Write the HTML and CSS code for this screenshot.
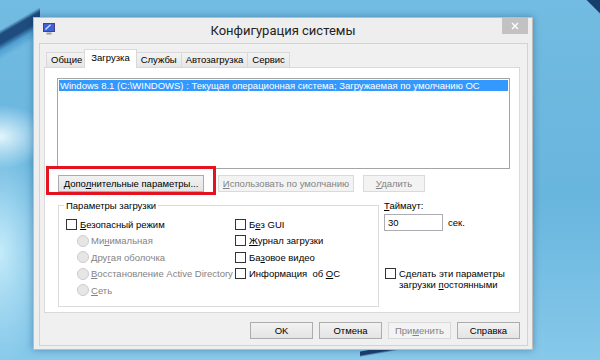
FILE: index.html
```html
<!DOCTYPE html>
<html lang="ru">
<head>
  <meta charset="UTF-8" />
  <title>Конфигурация системы</title>
  <link rel="stylesheet" href="styles.css">
</head>
<body>
  <div class="desktop">
    <div class="window">
      <div class="titlebar">
        <svg class="app-icon" viewBox="0 0 12 12" width="12" height="12">
          <rect x="0.5" y="0.5" width="11" height="8" fill="#3d63d6" stroke="#4a3f8f"/>
          <path d="M2.5 6.5 L7.5 1.8" stroke="#d9e8ff" stroke-width="1.2"/>
          <path d="M3.5 10.5 H8.5" stroke="#9c9c9c" stroke-width="2"/>
        </svg>
        <div class="title">Конфигурация системы</div>
        <div class="close">
          <svg viewBox="0 0 26 16" width="26" height="16">
            <path d="M10 5 L16 11 M16 5 L10 11" stroke="#fff" stroke-width="1.4"/>
          </svg>
        </div>
      </div>

      <div class="client">
        <div class="tabs">
          <div class="tab">Общие</div>
          <div class="tab active">Загрузка</div>
          <div class="tab">Службы</div>
          <div class="tab">Автозагрузка</div>
          <div class="tab">Сервис</div>
        </div>

        <div class="panel">
          <div class="listbox">
            <div class="item selected">Windows 8.1 (C:\WINDOWS) : Текущая операционная система; Загружаемая по умолчанию ОС</div>
          </div>

          <div class="btn-row">
            <button class="btn w-adv">Допо<u>л</u>нительные параметры...</button>
            <button class="btn w-default" disabled><u>И</u>спользовать по умолчанию</button>
            <button class="btn w-del" disabled><u>У</u>далить</button>
          </div>
          <div class="callout"></div>

          <div class="options">
            <fieldset class="group">
              <legend>Параметры загрузки</legend>
              <div class="group-cols">
                <div class="col col-left">
                  <div class="row"><span class="box"></span><u>Б</u>езопасный режим</div>
                  <div class="row radio"><span class="dot"></span>Ми<u>н</u>имальная</div>
                  <div class="row radio"><span class="dot"></span>Дру<u>г</u>ая оболочка</div>
                  <div class="row radio"><span class="dot"></span><u>В</u>осстановление Active Directory</div>
                  <div class="row radio"><span class="dot"></span><u>С</u>еть</div>
                </div>
                <div class="col">
                  <div class="row"><span class="box"></span>Б<u>е</u>з GUI</div>
                  <div class="row"><span class="box"></span><u>Ж</u>урнал загрузки</div>
                  <div class="row"><span class="box"></span>Ба<u>з</u>овое видео</div>
                  <div class="row"><span class="box"></span>Информация&nbsp;&nbsp;об&nbsp;<u>О</u>С</div>
                </div>
              </div>
            </fieldset>

            <div class="side">
              <div class="timeout-label"><u>Т</u>аймаут:</div>
              <div class="timeout-row">
                <div class="input">30</div>
                <span>сек.</span>
              </div>
              <div class="persist">
                <span class="box"></span>
                <span>Сделать эти параметры<br>загрузки <u>п</u>остоянными</span>
              </div>
            </div>
          </div>
        </div>

        <div class="footer">
          <button class="btn w-foot">OK</button>
          <button class="btn w-foot">Отмена</button>
          <button class="btn w-foot" disabled>При<u>м</u>енить</button>
          <button class="btn w-foot">Справка</button>
        </div>
      </div>
    </div>
  </div>
</body>
</html>
```

FILE: styles.css
```css
:root {
  --frame: #eeeeee;
  --face: #f0f0f0;
  --border: #d9d9d9;
  --btn-border: #acacac;
  --select: #3399ff;
  --muted: #838383;
  --callout: #e5131f;
}
* { box-sizing: border-box; }
body {
  margin: 0;
  font-family: "Liberation Sans", Arial, sans-serif;
  font-size: 9.5px;
  color: #000;
}
u { text-decoration: underline; text-underline-offset: 1px; }

/* desktop wallpaper */
.desktop {
  position: relative;
  width: 600px; height: 360px;
  overflow: hidden;
  background:
    linear-gradient(225deg, #173d6b 0 9px, transparent 10px) 100% 0 / 30px 14px no-repeat,
    linear-gradient(170deg, transparent 0 3px, #1b3f6e 4px 7px, transparent 9px) 360px 348px / 80px 12px no-repeat,
    linear-gradient(150deg, transparent 0 26px, #1f4c7e 30px 38px, #4f9fd2 44px, transparent 52px) 0 0 / 40px 120px no-repeat,
    radial-gradient(ellipse 70px 150px at 0 70%, #c4ebfa, transparent 75%),
    radial-gradient(ellipse 60px 40px at 0 38%, #e4f6fd, transparent 80%),
    linear-gradient(#72bbe1, #68b5de 55%, #86c9ea);
}

/* window */
.window {
  position: absolute;
  left: 33px; top: 17px;
  width: 500px; height: 333px;
  background: var(--frame);
  border: 1px solid #bdbdbd;
  box-shadow: 0 0 7px rgba(0, 40, 80, 0.35);
  display: flex; flex-direction: column;
}
.titlebar {
  height: 25px;
  display: grid;
  grid-template-columns: 40px 1fr 40px;
  align-items: start;
}
.app-icon { margin: 5px 0 0 9px; }
.title {
  text-align: center;
  font-family: Roboto, "Liberation Sans", sans-serif;
  font-size: 13px; line-height: 16px;
  padding-top: 5px;
  color: #222;
}
.close {
  justify-self: end;
  width: 26px; height: 16px;
  margin-right: 4px;
  background: #c2c2c2;
}
.close svg { display: block; }

.client {
  flex: 1;
  margin: 0 4px 3px 5px;
  border: 1px solid #d3d3d3;
  background: var(--face);
  padding: 5px 7px 0 4px;
  display: flex; flex-direction: column;
}

/* tabs */
.tabs {
  display: flex; align-items: flex-end;
  height: 18px;
  margin-left: 2px;
  position: relative; z-index: 1;
}
.tab {
  height: 15px;
  padding: 0 4px;
  line-height: 14px;
  border: 1px solid var(--border);
  border-bottom: none;
  background: linear-gradient(#f3f3f3, #e6e6e6);
  margin-right: -1px;
  white-space: nowrap;
}
.tab.active {
  height: 19px;
  margin: 0 -1px -1px -2px;
  padding: 0 6px;
  line-height: 16px;
  background: #fff;
  position: relative; z-index: 2;
}

.panel {
  position: relative;
  height: 246px;
  background: #fff;
  border: 1px solid var(--border);
}
.listbox {
  margin: 10px 9px 0 12px;
  height: 91px;
  border: 1px solid #a5a5a5;
  padding: 1px;
}
.item {
  height: 11px; line-height: 11px;
  padding-left: 1px;
  white-space: nowrap; overflow: hidden;
}
.item.selected { background: var(--select); color: #fff; }

/* buttons */
.btn {
  height: 17px;
  padding: 0;
  font: inherit;
  color: #000;
  border: 1px solid var(--btn-border);
  background: linear-gradient(#f2f2f2, #e4e4e4);
  white-space: nowrap;
}
.btn:disabled {
  color: var(--muted);
  border-color: #dadada;
  background: #f3f3f3;
}
.btn-row {
  display: flex;
  margin: 6px 0 0 13px;
}
.w-adv { width: 146px; }
.w-default { width: 136px; margin-left: 14px; }
.w-del { width: 62px; margin-left: 9px; }
.callout {
  position: absolute;
  left: 1px; top: 98px;
  width: 170px; height: 29px;
  border: 3px solid var(--callout);
}

/* options */
.options {
  display: flex;
  margin: 8px 0 0 13px;
}
.group {
  margin: 0; padding: 0;
  width: 321px; height: 107px;
  border: 1px solid #dcdcdc;
}
.group legend {
  margin-left: 5px;
  padding: 0 2px;
  line-height: 11px;
}
.group-cols {
  display: flex;
  margin: 5px 0 0 7px;
}
.col-left { width: 169px; }
.row {
  height: 16.5px;
  display: flex; align-items: center;
  white-space: nowrap;
}
.box {
  width: 11px; height: 11px;
  border: 1px solid #333;
  background: #fff;
  margin-right: 3px;
  flex: none;
}
.radio { color: var(--muted); padding-left: 11px; }
.dot {
  width: 12px; height: 12px;
  border-radius: 50%;
  border: 1px solid #cdcdcd;
  background: #e6e6e6;
  margin-right: 2px;
  flex: none;
}

.side { margin-left: 5px; }
.timeout-label { line-height: 12px; }
.timeout-row {
  display: flex; align-items: center;
  gap: 5px;
  margin-top: 2px;
}
.input {
  width: 59px; height: 17px;
  border: 1px solid #abadb3;
  background: #fff;
  padding-left: 3px;
  line-height: 15px;
}
.persist {
  display: flex; align-items: flex-start;
  margin-top: 37px; margin-left: 1px;
  line-height: 11px;
}

.footer {
  display: flex; justify-content: flex-end;
  gap: 6px;
  margin-top: 9px;
}
.w-foot { width: 63px; }
```
